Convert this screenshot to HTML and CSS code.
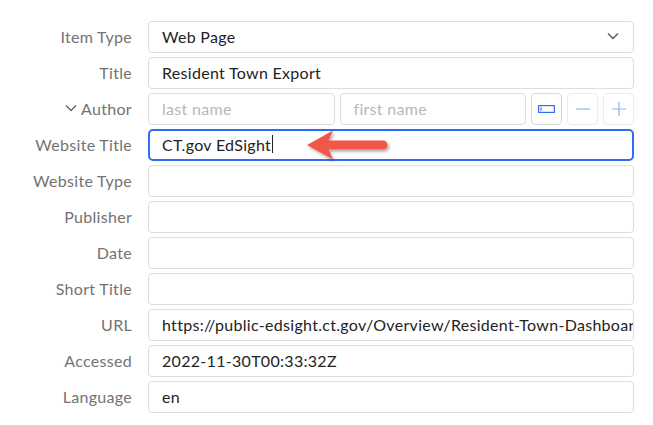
FILE: index.html
```html
<!DOCTYPE html>
<html lang="en">
<head>
<meta charset="UTF-8" />
<title>Item Info</title>
<link rel="stylesheet" href="styles.css">
</head>
<body>
<div class="pane">
  <form class="info">
    <label class="label">Item Type</label>
    <div class="field select">
      <span>Web Page</span>
      <svg class="chev" width="12" height="8" viewBox="0 0 12 8"><path d="M1 1.5l5 5 5-5" fill="none" stroke="#555" stroke-width="1.3"/></svg>
    </div>

    <label class="label">Title</label>
    <div class="field">Resident Town Export</div>

    <label class="label author-label">
      <svg width="12" height="8" viewBox="0 0 12 8"><path d="M1 1.5l5 5 5-5" fill="none" stroke="#666" stroke-width="1.3"/></svg>
      Author
    </label>
    <div class="creator">
      <div class="field placeholder">last name</div>
      <div class="field placeholder">first name</div>
      <button type="button" class="cbtn mode">
        <svg width="17" height="8" viewBox="0 0 17 8"><rect x="0.6" y="0.6" width="15.8" height="6.8" fill="none" stroke="#2f6df3" stroke-width="1.2"/><rect x="2.5" y="2.2" width="1.1" height="3.6" fill="#2f6df3"/></svg>
      </button>
      <button type="button" class="cbtn">
        <svg width="16" height="16" viewBox="0 0 16 16"><path d="M1 8h14" stroke="#8fb2f3" stroke-width="1.2"/></svg>
      </button>
      <button type="button" class="cbtn">
        <svg width="16" height="16" viewBox="0 0 16 16"><path d="M1 8h14M8 1v14" stroke="#8fb2f3" stroke-width="1.2"/></svg>
      </button>
    </div>

    <label class="label">Website Title</label>
    <div class="field focused">CT.gov EdSight<span class="caret"></span></div>

    <label class="label">Website Type</label>
    <div class="field"></div>

    <label class="label">Publisher</label>
    <div class="field"></div>

    <label class="label">Date</label>
    <div class="field"></div>

    <label class="label">Short Title</label>
    <div class="field"></div>

    <label class="label">URL</label>
    <div class="field">https://public-edsight.ct.gov/Overview/Resident-Town-Dashboard</div>

    <label class="label">Accessed</label>
    <div class="field">2022-11-30T00:33:32Z</div>

    <label class="label">Language</label>
    <div class="field">en</div>
  </form>

  <!-- annotation arrow drawn over the form -->
  <svg class="arrow" width="100" height="40" viewBox="0 0 100 40">
    <defs>
      <filter id="shadow" x="-20%" y="-30%" width="140%" height="170%">
        <feDropShadow dx="1.5" dy="2" stdDeviation="1.5" flood-color="#000" flood-opacity="0.35"/>
      </filter>
    </defs>
    <path d="M5 18 L31 3.5 L26.5 13.5 L81 13.5 A4.5 4.5 0 0 1 81 22.5 L26.5 22.5 L31 32.5 Z" fill="#f2564a" filter="url(#shadow)"/>
  </svg>
</div>
</body>
</html>
```

FILE: styles.css
```css
* {
  box-sizing: border-box;
}

body, html {
  margin: 0;
  background: #fff;
  font-family: Lato, "Open Sans", sans-serif;
  font-size: 16px;
  letter-spacing: 0.3px;
}

.pane {
  position: relative;
  width: 653px;
  height: 425px;
  padding: 21px 19px 0 0;
}

/* two column form: labels | fields */
.info {
  display: grid;
  grid-template-columns: 132px 1fr;
  grid-auto-rows: 32px;
  column-gap: 16px;
  row-gap: 4px;
}

.label {
  display: flex;
  align-items: center;
  justify-content: flex-end;
  padding-bottom: 2px;
  color: #737373;
  white-space: nowrap;
}

.author-label svg {
  margin-right: 4px;
}

.field {
  display: flex;
  align-items: center;
  min-width: 0;
  padding: 0 13px 2px;
  border: 1px solid #dedede;
  border-radius: 4px;
  color: #232323;
  white-space: nowrap;
  overflow: hidden;
}

.select {
  justify-content: space-between;
  padding-right: 14px;
}

.placeholder {
  color: #b8b8b8;
}

.focused {
  border: 2px solid #2d6cf5;
  border-radius: 5px;
  padding-left: 12px;
}

.caret {
  display: inline-block;
  width: 1px;
  height: 18px;
  margin-left: 1px;
  background: #222;
}

/* author row */
.creator {
  display: flex;
  gap: 5px;
}

.creator .field {
  flex: 1;
}

.cbtn {
  flex: 0 0 31px;
  display: flex;
  align-items: center;
  justify-content: center;
  padding: 0;
  background: #fff;
  border: 1px solid #ececec;
  border-radius: 4px;
}

.cbtn.mode {
  border-color: #d9d9d9;
}

.arrow {
  position: absolute;
  left: 302px;
  top: 127px;
}
```
